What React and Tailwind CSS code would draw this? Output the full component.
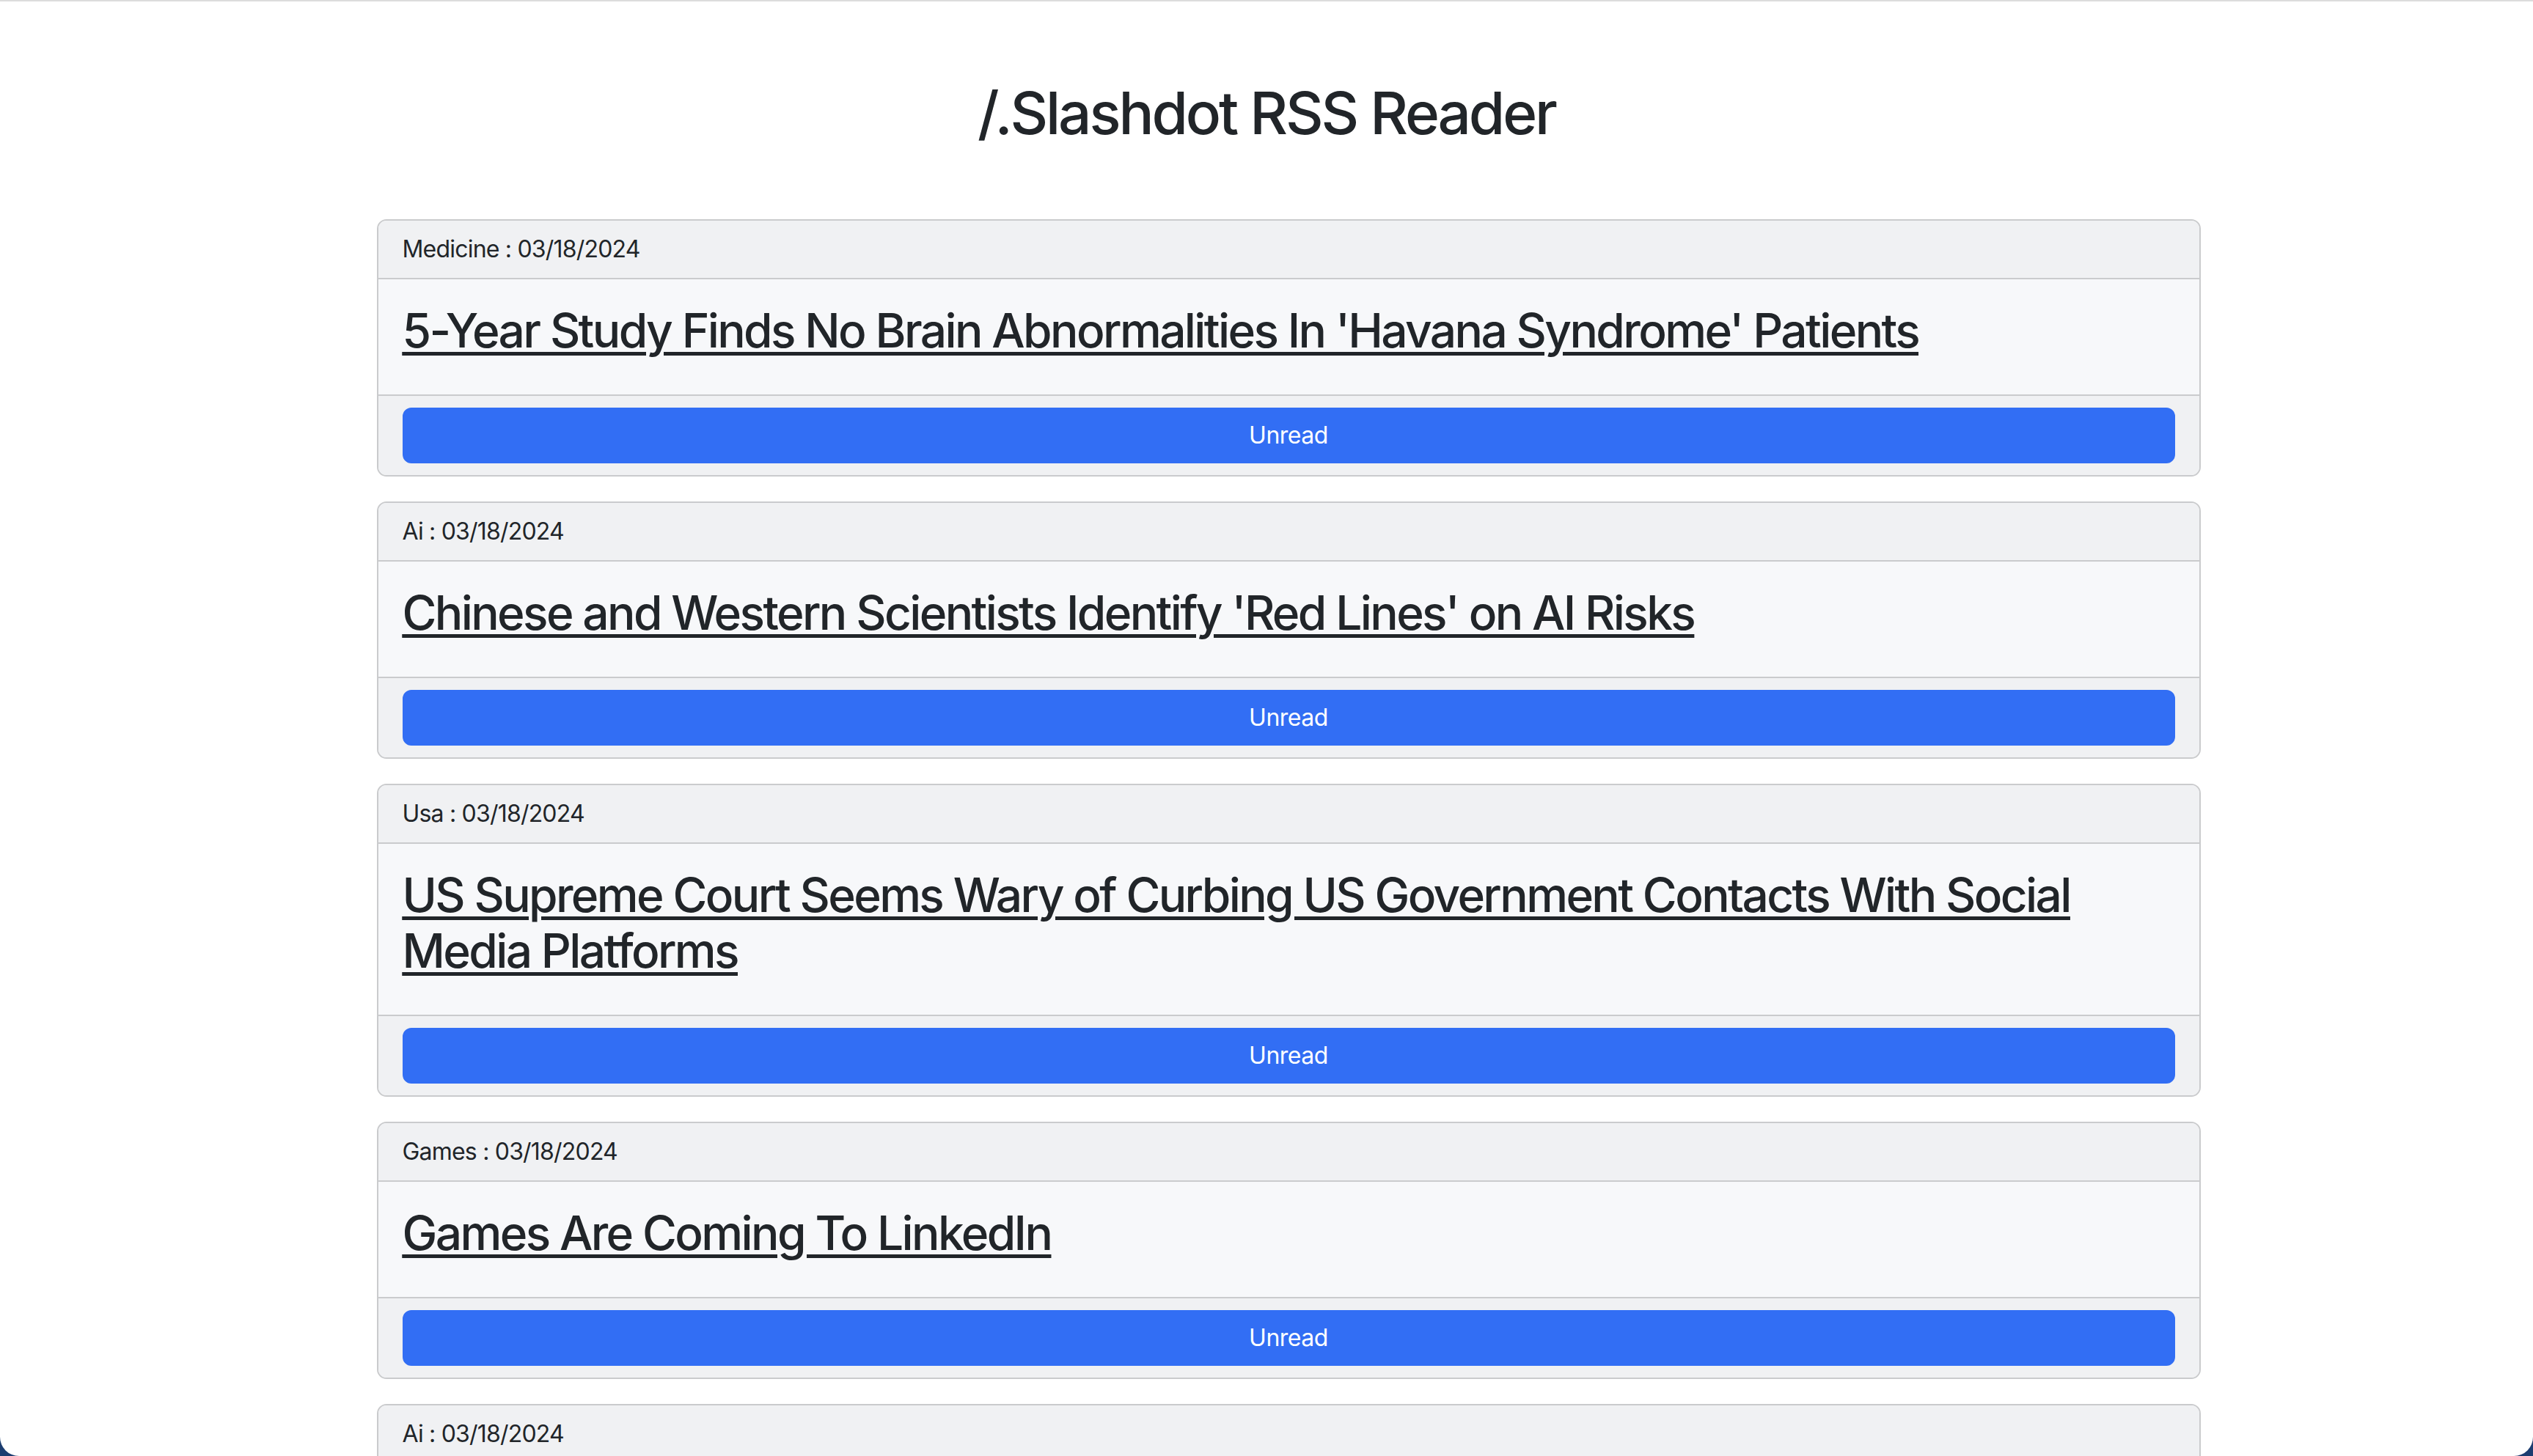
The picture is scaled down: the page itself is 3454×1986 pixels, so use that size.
import React from 'react';

const items = [
    { cat: 'Medicine', date: '03/18/2024', title: "5-Year Study Finds No Brain Abnormalities In 'Havana Syndrome' Patients" },
    { cat: 'Ai', date: '03/18/2024', title: "Chinese and Western Scientists Identify 'Red Lines' on AI Risks" },
    { cat: 'Usa', date: '03/18/2024', title: 'US Supreme Court Seems Wary of Curbing US Government Contacts With Social Media Platforms' },
    { cat: 'Games', date: '03/18/2024', title: 'Games Are Coming To LinkedIn' },
    { cat: 'Ai', date: '03/18/2024', title: 'Nvidia Reveals Blackwell B200 GPU, the World\'s Most Powerful Chip For AI' },
];

const FeedCard = ({ item }) => (
    <div className="rounded-[13px] border-2 border-[#cacbcd] overflow-hidden bg-[#f7f8fa]">
        {/* header */}
        <div className="bg-[#f0f1f3] border-b-2 border-[#cacbcd] px-[33px] py-[15px] text-[32px] leading-[48px] tracking-[-0.025em] text-[#212529]">
            {item.cat} : {item.date}
        </div>
        {/* body */}
        <div className="px-[33px] pt-[32px] pb-[32px] border-b-2 border-[#cacbcd]">
            <h2 className="mb-[16px] text-[64px] leading-[76.8px] tracking-[-0.041em] text-[#212529] font-medium underline decoration-[5px] underline-offset-[6px]">
                <a href="#">{item.title}</a>
            </h2>
        </div>
        {/* footer */}
        <div className="bg-[#f0f1f3] px-[33px] py-[16px]">
            <button className="w-full rounded-[12px] bg-[#326ef4] border-2 border-[#326ef4] py-[12px] text-[32px] leading-[48px] tracking-[-0.015em] text-white">
                Unread
            </button>
        </div>
    </div>
);

export default function App() {
    return (
        <div className="h-[1986px] bg-[#1c3d70] overflow-hidden" style={{ fontFamily: 'Inter, "Noto Sans", sans-serif' }}>
            <div className="h-full bg-white rounded-b-[26px] border-t-2 border-[#dcdcdc] overflow-hidden">
                <h1 className="pt-[104px] pb-[97px] text-center text-[80px] leading-[96px] tracking-[-0.039em] text-[#212529] font-medium">
                    /.Slashdot RSS Reader
                </h1>
                <div className="mx-auto w-[2555px] pl-[64px] pr-[4px] flex flex-col gap-[34px]">
                    {items.map((item, i) => (
                        <FeedCard key={i} item={item} />
                    ))}
                </div>
            </div>
        </div>
    );
}
